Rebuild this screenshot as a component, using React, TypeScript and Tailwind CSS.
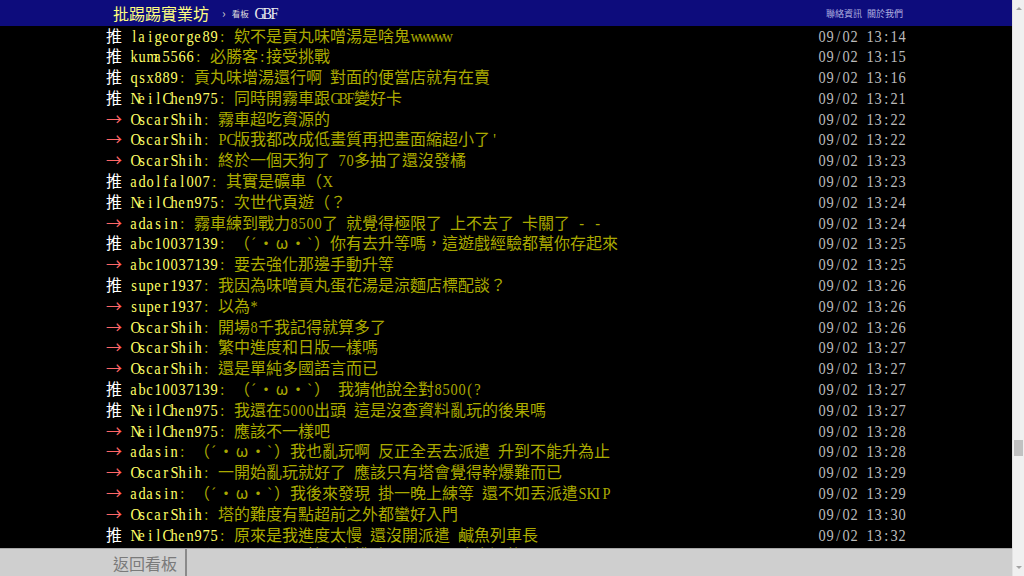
import React from "react";

type Row = { tag: "推" | "→"; user: string; text: string; time: string };

const rows: Row[] = [
  { tag: "推", user: "laigeorge89", text: "欸不是貢丸味噌湯是啥鬼wwwww", time: "09/02 13:14" },
  { tag: "推", user: "kuma5566", text: "必勝客:接受挑戰", time: "09/02 13:15" },
  { tag: "推", user: "qsx889", text: "貢丸味增湯還行啊 對面的便當店就有在賣", time: "09/02 13:16" },
  { tag: "推", user: "NeilChen975", text: "同時開霧車跟GBF變好卡", time: "09/02 13:21" },
  { tag: "→", user: "OscarShih", text: "霧車超吃資源的", time: "09/02 13:22" },
  { tag: "→", user: "OscarShih", text: "PC版我都改成低畫質再把畫面縮超小了'", time: "09/02 13:22" },
  { tag: "→", user: "OscarShih", text: "終於一個天狗了 70多抽了還沒發橘", time: "09/02 13:23" },
  { tag: "推", user: "adolfal007", text: "其實是礦車（X", time: "09/02 13:23" },
  { tag: "推", user: "NeilChen975", text: "次世代頁遊（？", time: "09/02 13:24" },
  { tag: "→", user: "adasin", text: "霧車練到戰力8500了 就覺得極限了 上不去了 卡關了 - -", time: "09/02 13:24" },
  { tag: "推", user: "abc10037139", text: "（´・ω・`）你有去升等嗎，這遊戲經驗都幫你存起來", time: "09/02 13:25" },
  { tag: "→", user: "abc10037139", text: "要去強化那邊手動升等", time: "09/02 13:25" },
  { tag: "推", user: "super1937", text: "我因為味噌貢丸蛋花湯是涼麵店標配談？", time: "09/02 13:26" },
  { tag: "→", user: "super1937", text: "以為*", time: "09/02 13:26" },
  { tag: "→", user: "OscarShih", text: "開場8千我記得就算多了", time: "09/02 13:26" },
  { tag: "→", user: "OscarShih", text: "繁中進度和日版一樣嗎", time: "09/02 13:27" },
  { tag: "→", user: "OscarShih", text: "還是單純多國語言而已", time: "09/02 13:27" },
  { tag: "推", user: "abc10037139", text: "（´・ω・`） 我猜他說全對8500(?", time: "09/02 13:27" },
  { tag: "推", user: "NeilChen975", text: "我還在5000出頭 這是沒查資料亂玩的後果嗎", time: "09/02 13:27" },
  { tag: "→", user: "NeilChen975", text: "應該不一樣吧", time: "09/02 13:28" },
  { tag: "→", user: "adasin", text: "（´・ω・`）我也亂玩啊 反正全丟去派遣 升到不能升為止", time: "09/02 13:28" },
  { tag: "→", user: "OscarShih", text: "一開始亂玩就好了 應該只有塔會覺得幹爆難而已", time: "09/02 13:29" },
  { tag: "→", user: "adasin", text: "（´・ω・`）我後來發現 掛一晚上練等 還不如丟派遣SKIP", time: "09/02 13:29" },
  { tag: "→", user: "OscarShih", text: "塔的難度有點超前之外都蠻好入門", time: "09/02 13:30" },
  { tag: "推", user: "NeilChen975", text: "原來是我進度太慢 還沒開派遣 鹹魚列車長", time: "09/02 13:32" },
  { tag: "→", user: "adasin", text: "（´・ω・`）那就一直挑戰吧 反正早晚會過的", time: "09/02 13:33" },
];

function Cells({ text }: { text: string }) {
  return (
    <>
      {Array.from(text).map((ch, i) => {
        const half = ch.charCodeAt(0) < 0x100;
        if (half) {
          return (
            <span key={i} className="inline-block w-2 text-center">
              <span className="inline-block scale-x-[0.9] font-['Liberation_Serif','Noto_Sans_CJK_TC',serif]">
                {ch === " " ? "\u00a0" : ch}
              </span>
            </span>
          );
        }
        return (
          <span key={i} className="inline-block w-4 text-center">
            {ch}
          </span>
        );
      })}
    </>
  );
}

export default function App() {
  return (
    <div className="flex h-[576px] w-[1024px] overflow-hidden bg-black font-['Noto_Sans_CJK_TC',sans-serif]">
      <div className="flex min-w-0 flex-1 flex-col">
        {/* top bar */}
        <div className="relative z-10 h-[26px] shrink-0 bg-[#0d0c7c]">
          <div className="mx-auto flex h-full w-[800px] items-center justify-between pl-[7px] pr-[3px]">
            <div className="flex items-center">
              <span className="text-[16px] leading-none text-[#ffff80]">批踢踢實業坊</span>
              <span className="ml-[13px] text-[12px] leading-none text-[#cccccc]">›</span>
              <span className="ml-[6px] text-[8.5px] leading-none text-[#dddddd]">看板</span>
              <span className="ml-[5px] text-[16px] leading-none text-[#eeeeee]">
                <Cells text="GBF" />
              </span>
            </div>
            <div className="flex items-center gap-[5px] text-[9px] leading-none text-[#b0b0e0]">
              <span>聯絡資訊</span>
              <span>關於我們</span>
            </div>
          </div>
        </div>

        {/* pushes */}
        <div className="min-h-0 flex-1 overflow-hidden">
          <div className="mx-auto -mt-[1.5px] w-[800px] text-[16px] leading-[20.8px]">
            {rows.map((r, i) => (
              <div key={i} className="flex h-[20.8px] justify-between whitespace-nowrap">
                <div>
                  <span className={r.tag === "推" ? "text-white" : "text-[#ff6666]"}>
                    <Cells text={r.tag + " "} />
                  </span>
                  <span className="text-[#ffff66]">
                    <Cells text={r.user} />
                  </span>
                  <span className="text-[#aaaa00]">
                    <Cells text={": " + r.text} />
                  </span>
                </div>
                <div className="text-[#bbbbbb]">
                  <Cells text={r.time} />
                </div>
              </div>
            ))}
          </div>
        </div>

        {/* bottom bar */}
        <div className="h-[28px] shrink-0 border-t border-[#a8a8a8] bg-[#cfcfcf]">
          <div className="mx-auto flex h-full w-[800px]">
            <div className="flex h-full items-center border-r-2 border-[#8a8a8a] pl-[7px] pr-[8px] text-[16px] leading-none text-[#7a7a7a]">
              返回看板
            </div>
          </div>
        </div>
      </div>

      {/* scrollbar */}
      <div className="flex w-[12px] shrink-0 flex-col border-l border-[#e2e2e2] bg-[#f0f0f0]">
        <div className="flex h-[17px] items-center justify-center">
          <div className="h-0 w-0 border-x-[3px] border-b-[3px] border-x-transparent border-b-[#a3a3a3]" />
        </div>
        <div className="flex-1">
          <div className="mx-auto mt-[423px] h-[16px] w-[9px] bg-[#c1c1c1]" />
        </div>
        <div className="flex h-[17px] items-center justify-center">
          <div className="h-0 w-0 border-x-[3px] border-t-[3px] border-x-transparent border-t-[#a3a3a3]" />
        </div>
      </div>
    </div>
  );
}
